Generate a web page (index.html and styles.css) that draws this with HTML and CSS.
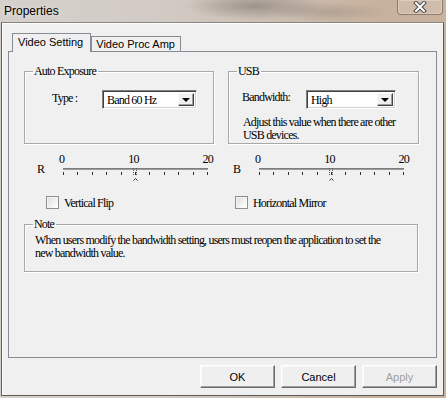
FILE: index.html
```html
<!DOCTYPE html>
<html>
<head>
<meta charset="utf-8">
<link rel="stylesheet" href="styles.css">
</head>
<body>
<div class="window">
  <div class="titlebar">
    <span class="title">Properties</span>
    <div class="close">
      <svg width="14" height="12" viewBox="0 0 14 12">
        <path d="M3 2 L11 10 M11 2 L3 10" stroke="#4a4a4a" stroke-width="4" stroke-linecap="square" fill="none"/>
        <path d="M3 2 L11 10 M11 2 L3 10" stroke="#ffffff" stroke-width="2" stroke-linecap="square" fill="none"/>
      </svg>
    </div>
  </div>
  <div class="client">
    <div class="tabs">
      <div class="tab active">Video Setting</div>
      <div class="tab">Video Proc Amp</div>
    </div>
    <div class="panel">
      <div class="groups">
        <fieldset class="group ae">
          <legend>Auto Exposure</legend>
          <div class="field">
            <span class="lbl type-lbl">Type :</span>
            <div class="select ae-select"><span class="val">Band 60 Hz</span><span class="drop"><i class="tri"></i></span></div>
          </div>
        </fieldset>
        <fieldset class="group usb">
          <legend>USB</legend>
          <div class="field usb-field">
            <span class="lbl bw-lbl">Bandwidth:</span>
            <div class="select usb-select"><span class="val">High</span><span class="drop"><i class="tri"></i></span></div>
          </div>
          <p class="hint">Adjust this value when there are other<br>USB devices.</p>
        </fieldset>
      </div>

      <div class="sliders">
        <div class="slider left">
          <span class="axis">R</span>
          <div class="scale">
            <div class="nums"><span>0</span><span>10</span><span>20</span></div>
            <div class="track">
              <svg class="thumb" width="7" height="14" viewBox="0 0 7 14">
                <path d="M1.5 0 V8 M4.5 0 V8" stroke="#555" stroke-width="1" stroke-dasharray="1 1" fill="none"/>
                <path d="M1.5 12.5 L3.5 10.5 L5.5 12.5" stroke="#333" stroke-width="1" fill="none"/>
              </svg>
            </div>
            <div class="ticks"><i></i><i></i><i></i><i></i><i></i><i></i><i></i><i></i><i></i><i></i><i></i></div>
          </div>
        </div>
        <div class="slider right">
          <span class="axis">B</span>
          <div class="scale">
            <div class="nums"><span>0</span><span>10</span><span>20</span></div>
            <div class="track">
              <svg class="thumb" width="7" height="14" viewBox="0 0 7 14">
                <path d="M1.5 0 V8 M4.5 0 V8" stroke="#555" stroke-width="1" stroke-dasharray="1 1" fill="none"/>
                <path d="M1.5 12.5 L3.5 10.5 L5.5 12.5" stroke="#333" stroke-width="1" fill="none"/>
              </svg>
            </div>
            <div class="ticks"><i></i><i></i><i></i><i></i><i></i><i></i><i></i><i></i><i></i><i></i><i></i></div>
          </div>
        </div>
      </div>

      <div class="checks">
        <label class="check left"><span class="box"></span><span class="ctext">Vertical Flip</span></label>
        <label class="check right"><span class="box"></span><span class="ctext">Horizontal Mirror</span></label>
      </div>

      <fieldset class="group note">
        <legend>Note</legend>
        <p class="note-text">When users modify the bandwidth setting, users must reopen the application to set the<br>new bandwidth value.</p>
      </fieldset>
    </div>
    <div class="buttons">
      <button class="btn">OK</button>
      <button class="btn">Cancel</button>
      <button class="btn disabled">Apply</button>
    </div>
  </div>
</div>
</body>
</html>
```

FILE: styles.css
```css
html, body {
  margin: 0;
  padding: 0;
}

body {
  width: 446px;
  height: 398px;
  overflow: hidden;
}

.window {
  width: 446px;
  height: 398px;
  display: flex;
  flex-direction: column;
  background:
    radial-gradient(ellipse 70px 14px at 255px 6px, rgba(120,110,105,0.55), rgba(120,110,105,0) 100%),
    radial-gradient(ellipse 60px 10px at 330px 12px, rgba(150,135,125,0.45), rgba(150,135,125,0) 100%),
    linear-gradient(90deg, #d6d0cb 0%, #d2cbc5 35%, #cbbdb0 65%, #c8b29d 85%, #c9b39f 100%);
}

.titlebar {
  height: 22px;
  flex: none;
  display: flex;
  align-items: flex-start;
  justify-content: space-between;
}

.title {
  font-family: "Liberation Sans", Arial, sans-serif;
  font-size: 12px;
  line-height: 14px;
  padding: 4px 0 0 4px;
  color: #000;
  text-shadow: 0 0 6px rgba(255,255,255,0.7);
}

.close {
  width: 44px;
  height: 14px;
  margin-right: 3px;
  border: 1px solid rgba(90,70,60,0.55);
  border-top: none;
  border-radius: 0 0 4px 4px;
  background: rgba(255,255,255,0.12);
  box-shadow: inset 0 0 0 1px rgba(255,255,255,0.25);
  display: flex;
  align-items: center;
  justify-content: center;
}

.client {
  flex: 1;
  margin: 0 2px 2px 1px;
  border: 1px solid #5e5a58;
  border-top-color: #8a847f;
  background: #f0f0f0;
  box-shadow: inset 1px 1px 0 #ffffff;
  display: flex;
  flex-direction: column;
  padding: 0 6px;
}

/* Tabs */
.tabs {
  height: 28px;
  flex: none;
  display: flex;
  align-items: flex-end;
  padding-left: 4px;
  font-family: "Liberation Sans", Arial, sans-serif;
  font-size: 11px;
  color: #000;
}

.tab {
  border: 1px solid #898c95;
  border-bottom: none;
  background: #f0f0f0;
  height: 14px;
  line-height: 14px;
  padding: 0 5px 0 4px;
  white-space: nowrap;
}

.tab.active {
  position: relative;
  z-index: 1;
  height: 18px;
  line-height: 16px;
  margin-bottom: -1px;
  padding: 0 7px 0 5px;
  background: #f0f0f0;
}

.tab + .tab {
  border-left: none;
}

.tab.active + .tab {
  border-left: 1px solid #898c95;
}

/* Panel */
.panel {
  flex: none;
  box-sizing: border-box;
  height: 307px;
  border: 1px solid #898c95;
  background: #f0f0f0;
  padding: 12px 17px 0 15px;
  font-family: "Liberation Serif", "Times New Roman", serif;
  font-size: 12px;
  letter-spacing: -0.8px;
  color: #000;
}

.groups {
  display: grid;
  grid-template-columns: 190px 191px;
  column-gap: 14px;
}

fieldset.group {
  margin: 0;
  padding: 0 0 0 8px;
  border: 1px solid #a8a8a8;
  box-shadow: 1px 1px 0 #ffffff, inset 1px 1px 0 #ffffff;
  min-width: 0;
}

fieldset.group legend {
  padding: 0 2px 0 1px;
  line-height: 14px;
}

.field {
  display: flex;
  align-items: center;
  margin-top: 12px;
}

.ae .field {
  margin-left: 19px;
}

.type-lbl {
  width: 50px;
  margin-top: -2px;
}

.usb-field {
  margin-left: 5px;
}

.bw-lbl {
  width: 64px;
  margin-top: -5px;
}

.select {
  height: 19px;
  box-sizing: border-box;
  background: #ffffff;
  border-top: 1px solid #7f7f7f;
  border-left: 1px solid #7f7f7f;
  border-right: 1px solid #ffffff;
  border-bottom: 1px solid #ffffff;
  box-shadow: inset 1px 1px 0 #404040, inset -1px -1px 0 #d4d0c8;
  display: flex;
  align-items: stretch;
  padding: 2px 2px 2px 4px;
}

.ae-select { width: 95px; }
.usb-select { width: 90px; }

.val {
  flex: 1;
  line-height: 15px;
  font-size: 12px;
}

.drop {
  width: 16px;
  box-sizing: border-box;
  background: #f0f0f0;
  border-top: 1px solid #f8f8f8;
  border-left: 1px solid #f8f8f8;
  border-right: 1px solid #404040;
  border-bottom: 1px solid #404040;
  box-shadow: inset -1px -1px 0 #a0a0a0;
  display: flex;
  align-items: center;
  justify-content: center;
}

.tri {
  width: 0;
  height: 0;
  border-left: 4px solid transparent;
  border-right: 4px solid transparent;
  border-top: 4px solid #000;
}

.hint {
  margin: 7px 0 1px 6px;
  line-height: 13px;
}

/* Sliders */
.sliders {
  display: grid;
  grid-template-columns: 190px 191px;
  column-gap: 14px;
  margin-top: 9px;
}

.slider {
  display: flex;
}

.slider.left { padding-left: 13px; }
.slider.right { padding-left: 5px; }

.axis {
  width: 26px;
  padding-top: 10px;
  line-height: 12px;
}

.scale {
  width: 145px;
}

.nums {
  display: flex;
  justify-content: space-between;
  margin: 0 -5px 0 -4px;
  height: 12px;
  line-height: 12px;
}

.track {
  position: relative;
  margin-top: 3px;
  height: 2px;
  background: #9d9d9d;
  border-top: 1px solid #7d7d7d;
  box-sizing: border-box;
}

.thumb {
  position: absolute;
  left: 69px;
  top: -1px;
}

.ticks {
  display: flex;
  justify-content: space-between;
  margin-top: 2px;
  height: 3px;
}

.ticks i {
  display: block;
  width: 1px;
  height: 3px;
  background: #303030;
}

/* Checkboxes */
.checks {
  display: grid;
  grid-template-columns: 190px 191px;
  column-gap: 14px;
  margin-top: 21px;
}

.check {
  display: flex;
  align-items: center;
  height: 13px;
}

.check.left { padding-left: 22px; }
.check.right { padding-left: 7px; }

.box {
  width: 13px;
  height: 13px;
  box-sizing: border-box;
  border: 1px solid #8f8f8f;
  background: linear-gradient(135deg, #dcdcdc 0%, #f4f4f4 60%, #ffffff 100%);
  box-shadow: inset 1px 1px 0 #f4f4f4;
  margin-right: 5px;
}

.ctext {
  line-height: 13px;
  margin-top: 1px;
}

/* Note */
fieldset.note {
  margin: 8px 1px 0 0;
}

.note-text {
  margin: 3px 0 11px 2px;
  line-height: 13px;
}

/* Buttons */
.buttons {
  display: flex;
  justify-content: flex-end;
  gap: 6px;
  margin-top: 7px;
}

.btn {
  width: 75px;
  height: 23px;
  box-sizing: border-box;
  margin: 0;
  padding: 0;
  font-family: "Liberation Sans", Arial, sans-serif;
  font-size: 11px;
  color: #000;
  background: #efefef;
  border-top: 1px solid #ffffff;
  border-left: 1px solid #ffffff;
  border-right: 1px solid #6a6a6a;
  border-bottom: 1px solid #6a6a6a;
  box-shadow: inset -1px -1px 0 #a0a0a0, inset 1px 1px 0 #f8f8f8;
  border-radius: 0;
}

.btn.disabled {
  color: #a0a0a0;
}
```
